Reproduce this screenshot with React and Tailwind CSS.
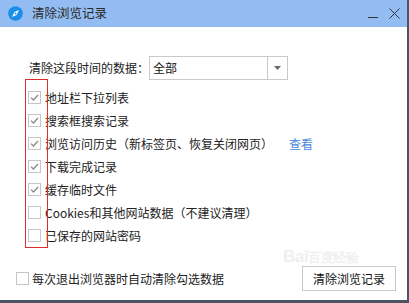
import React from "react";

const Check = ({ checked }) => (
  <span className="w-[13px] h-[13px] border border-[#c6c6c6] bg-white flex items-center justify-center shrink-0">
    {checked && (
      <svg width="11" height="11" viewBox="0 0 11 11">
        <path d="M2 5.6 L4.4 8 L9 3" fill="none" stroke="#8a8a8a" strokeWidth="1.3" />
      </svg>
    )}
  </span>
);

const rows = [
  { t: "地址栏下拉列表", c: true },
  { t: "搜索框搜索记录", c: true },
  { t: "浏览访问历史（新标签页、恢复关闭网页）", c: true, link: true },
  { t: "下载完成记录", c: true },
  { t: "缓存临时文件", c: true },
  { t: "Cookies和其他网站数据（不建议清理）", c: false },
  { t: "已保存的网站密码", c: false },
];

export default function App() {
  return (
    <div
      className="relative w-[409px] h-[303px] bg-white flex flex-col border-r-2 border-b-[3px] border-[#4b5364] text-[12px] text-[#222]"
      style={{ fontFamily: '"Noto Sans CJK SC", "Liberation Sans", sans-serif' }}
    >
      <div className="h-[27px] bg-[#93bdf2] flex items-center pl-[8px] pr-[7px] shrink-0">
        <svg width="15" height="15" viewBox="0 0 15 15">
          <circle cx="7.5" cy="7.5" r="7.3" fill="#1b8ee8" />
          <path d="M11 4 L8.6 9 L4 11 L6.4 6 Z" fill="#fff" />
          <circle cx="7.5" cy="7.5" r="0.9" fill="#1b8ee8" />
        </svg>
        <span className="ml-[9px] text-[12.5px] leading-none text-[#2a2a2a]">清除浏览记录</span>
        <div className="ml-auto flex items-center gap-[11px]">
          <div className="w-[10px] h-[1px] bg-[#333] mt-[8px]" />
          <svg width="11" height="11" viewBox="0 0 11 11">
            <path d="M0.5 0.5 L10.5 10.5 M10.5 0.5 L0.5 10.5" stroke="#333" strokeWidth="1" />
          </svg>
        </div>
      </div>

      <div className="pl-[28px] pt-[29px] flex flex-col">
        <div className="flex items-center h-[24px]">
          <span className="w-[121px] pl-[1px] leading-none">清除这段时间的数据：</span>
          <div className="w-[139px] h-[24px] border border-[#cacaca] flex items-center">
            <span className="pl-[3px] flex-1 leading-none text-[#111]">全部</span>
            <div className="w-[20px] h-full border-l border-[#cacaca] flex items-center justify-center">
              <svg width="7" height="4" viewBox="0 0 7 4">
                <path d="M0 0 L7 0 L3.5 4 Z" fill="#6a6a6a" />
              </svg>
            </div>
          </div>
        </div>

        <div className="mt-[6px] flex flex-col">
          {rows.map((r, i) => (
            <div key={i} className="h-[23px] flex items-center">
              <Check checked={r.c} />
              <span className="ml-[4px] leading-none">{r.t}</span>
              {r.link && <span className="ml-[16px] leading-none text-[#4a89dc]">查看</span>}
            </div>
          ))}
        </div>
      </div>

      <div className="mt-auto flex items-center justify-between pl-[16px] pr-[11px] pb-[9px]">
        <div className="flex items-center">
          <Check checked={false} />
          <span className="ml-[3px] leading-none">每次退出浏览器时自动清除勾选数据</span>
        </div>
        <div className="relative w-[94px] h-[25px] border border-[#c9c9c9] bg-white flex items-center justify-center">
          <span className="absolute -top-[19px] left-[-20px] text-[17px] font-bold leading-none text-[#f0f0f0] tracking-tight" style={{ fontFamily: '"Liberation Sans", sans-serif' }}>
            Bai<span className="text-[13px]">百度</span><span className="text-[13px]">经验</span>
          </span>
          <span className="relative leading-none text-[#111]">清除浏览记录</span>
        </div>
      </div>

      <div className="absolute left-[25px] top-[79px] w-[23px] h-[169px] border border-[#dc2f2a] pointer-events-none" />
    </div>
  );
}
